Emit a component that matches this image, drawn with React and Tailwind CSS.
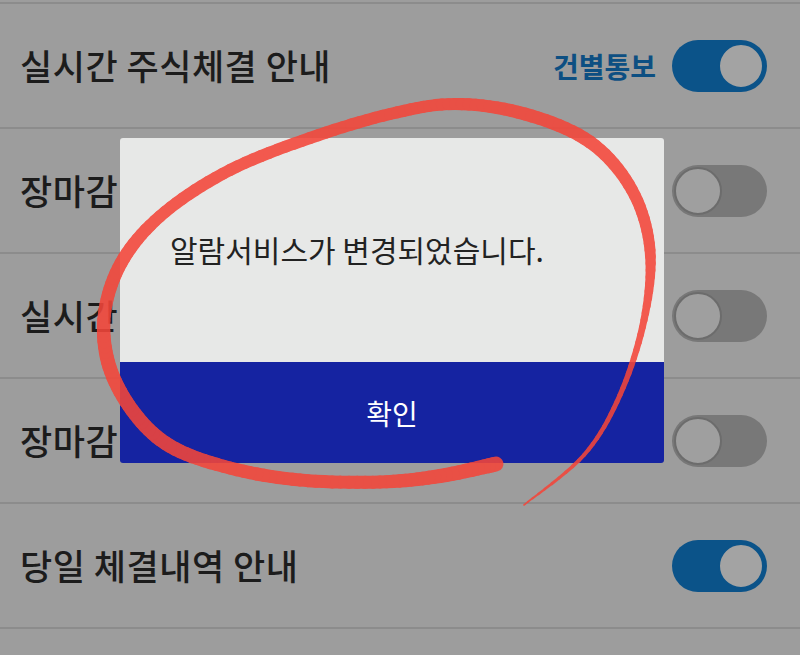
import React from "react";

const rows = [
  { label: "실시간 주식체결 안내", on: true, tag: "건별통보" },
  { label: "장마감 주식체결 안내", on: false },
  { label: "실시간 선물옵션체결 안내", on: false },
  { label: "장마감 선물옵션체결 안내", on: false },
  { label: "당일 체결내역 안내", on: true },
];

// hand-drawn circle, points read off the screenshot, with pen width
const pts = [
  [496, 464, 15], [440, 476, 14], [380, 482, 13], [300, 480, 13], [230, 468, 13], [170, 446, 14],
  [132, 410, 14], [108, 362, 14], [105, 310, 13], [124, 258, 13], [165, 212, 12], [230, 170, 12],
  [310, 138, 12], [390, 114, 12], [455, 104, 12], [525, 114, 13], [590, 142, 13], [632, 190, 12],
  [650, 250, 11], [644, 320, 7], [620, 395, 5], [584, 455, 4], [524, 505, 1.5],
];

function sample(p, steps) {
  const out = [];
  for (let i = 0; i < p.length - 1; i++) {
    const p0 = p[i - 1] || p[i];
    const p1 = p[i];
    const p2 = p[i + 1];
    const p3 = p[i + 2] || p2;
    for (let s = 0; s < steps; s++) {
      const t = s / steps;
      const t2 = t * t;
      const t3 = t2 * t;
      const f = (a, b, c, d) =>
        0.5 * (2 * b + (-a + c) * t + (2 * a - 5 * b + 4 * c - d) * t2 + (-a + 3 * b - 3 * c + d) * t3);
      out.push([
        f(p0[0], p1[0], p2[0], p3[0]),
        f(p0[1], p1[1], p2[1], p3[1]),
        p1[2] + (p2[2] - p1[2]) * t,
      ]);
    }
  }
  out.push(p[p.length - 1]);
  return out;
}

const stroke = sample(pts, 10);

function Toggle({ on }) {
  if (on) {
    return (
      <div className="w-[95px] h-[52px] rounded-full bg-[#0b5389] flex items-center justify-end p-[3px]">
        <div className="w-[46px] h-[46px] rounded-full bg-[#a3a3a3] border-2 border-[#0b5389]" />
      </div>
    );
  }
  return (
    <div className="w-[95px] h-[52px] rounded-full bg-[#787878] flex items-center justify-start p-[2px]">
      <div className="w-[48px] h-[48px] rounded-full bg-[#9f9f9f] border-2 border-[#6c6c6c]" />
    </div>
  );
}

export default function App() {
  return (
    <div
      className="relative w-[800px] h-[655px] overflow-hidden bg-[#9d9d9d]"
      style={{ fontFamily: '"Noto Sans CJK KR", "Noto Sans", sans-serif' }}
    >
      <div className="pt-[2px]">
        <div className="h-[2px] bg-[#8c8c8c]" />
        {rows.map((r, i) => (
          <div key={i}>
            <div className="h-[123px] flex items-center justify-between pl-[20px] pr-[33px]">
              <span className="text-[35px] font-medium text-[#1c1c1c] tracking-[0.5px]">{r.label}</span>
              <div className="flex items-center gap-[16px]">
                {r.tag && <span className="text-[28px] font-bold text-[#0d4f82]">{r.tag}</span>}
                <Toggle on={r.on} />
              </div>
            </div>
            <div className="h-[2px] bg-[#8c8c8c]" />
          </div>
        ))}
      </div>

      <div className="absolute left-[120px] top-[138px] w-[544px] h-[325px] rounded-[3px] overflow-hidden flex flex-col">
        <div className="h-[224px] bg-[#e7e8e7] flex items-center pl-[50px] pb-[2px]">
          <span className="text-[30px] text-[#222]">알람서비스가 변경되었습니다.</span>
        </div>
        <div className="flex-1 bg-[#1523a1] flex items-center justify-center">
          <span className="text-[28px] text-white">확인</span>
        </div>
      </div>

      <svg className="absolute inset-0 pointer-events-none" width="800" height="655">
        <g opacity="0.88" stroke="#f4463a" strokeLinecap="round">
          {stroke.slice(1).map((q, i) => {
            const a = stroke[i];
            return (
              <line key={i} x1={a[0]} y1={a[1]} x2={q[0]} y2={q[1]} strokeWidth={(a[2] + q[2]) / 2} />
            );
          })}
        </g>
      </svg>
    </div>
  );
}
